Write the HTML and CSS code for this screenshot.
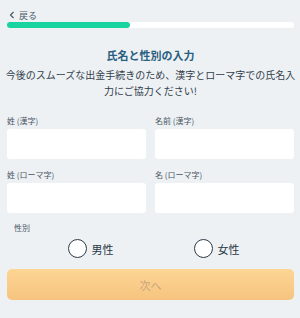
FILE: index.html
```html
<!DOCTYPE html>
<html>

<head>
    <meta name="viewport" content="width=device-width, initial-scale=1, user-scalable=no"/>
    <link rel="stylesheet" href="styles.css">
</head>

<body>
    <div class="page">
        <a class="back" href="#">
            <svg width="6" height="8" viewBox="0 0 6 8"><path d="M4.5 1 L1.5 4 L4.5 7" fill="none" stroke="#4a5866" stroke-width="1.2"/></svg>
            <span>戻る</span>
        </a>
        <div class="progress"><span class="progress-fill" style="width: 43%"></span></div>

        <h1 class="title">氏名と性別の入力</h1>
        <p class="lead">今後のスムーズな出金手続きのため、漢字とローマ字での氏名入力にご協力ください!</p>

        <div class="fields">
            <label class="field">
                <span class="field-label">姓 (漢字)</span>
                <input type="text">
            </label>
            <label class="field">
                <span class="field-label">名前 (漢字)</span>
                <input type="text">
            </label>
            <label class="field">
                <span class="field-label">姓 (ローマ字)</span>
                <input type="text">
            </label>
            <label class="field">
                <span class="field-label">名 (ローマ字)</span>
                <input type="text">
            </label>
        </div>

        <div class="gender">
            <span class="gender-label">性別</span>
            <div class="radios">
                <label class="radio"><span class="circle"></span>男性</label>
                <label class="radio"><span class="circle"></span>女性</label>
            </div>
        </div>

        <button class="next" disabled>次へ</button>
    </div>
</body>

</html>
```

FILE: styles.css
```css
body {
    margin: 0;
    background: #edf1f4;
    font-family: "Noto Sans CJK JP", "Noto Sans", sans-serif;
    color: #2f3b47;
}

.page {
    padding: 8px 6px 0 7px;
}

.back {
    display: flex;
    align-items: center;
    gap: 4px;
    height: 14px;
    padding-left: 2px;
    font-size: 9px;
    color: #4a5866;
    text-decoration: none;
}

.progress {
    height: 6px;
    border-radius: 3px;
    background: #ffffff;
}

.progress-fill {
    display: block;
    height: 100%;
    border-radius: 3px;
    background: #17d3a0;
}

.title {
    margin: 19px 0 0;
    text-align: center;
    font-size: 11px;
    line-height: 16px;
    font-weight: bold;
    color: #2a5f7f;
}

.lead {
    margin: 4px -2px 0;
    text-align: center;
    font-size: 10px;
    line-height: 16px;
    color: #33404c;
}

.fields {
    display: grid;
    grid-template-columns: minmax(0, 1fr) minmax(0, 1fr);
    column-gap: 9px;
    row-gap: 10px;
    margin-top: 16px;
}

.field {
    display: flex;
    flex-direction: column;
    gap: 3px;
    min-width: 0;
}

.field-label {
    font-size: 8px;
    line-height: 11px;
    color: #4a5663;
}

.field input {
    width: 100%;
    height: 30px;
    box-sizing: border-box;
    border: none;
    border-radius: 3px;
    background: #ffffff;
}

.gender {
    margin-top: 9px;
}

.gender-label {
    display: block;
    padding-left: 7px;
    font-size: 8px;
    line-height: 11px;
    color: #4a5663;
}

.radios {
    display: flex;
    justify-content: center;
    gap: 80px;
    margin-top: 6px;
    padding-left: 6px;
}

.radio {
    display: flex;
    align-items: center;
    gap: 5px;
    font-size: 11px;
    color: #2a3846;
}

.circle {
    width: 17px;
    height: 17px;
    border: 1.5px solid #2c3a48;
    border-radius: 50%;
    background: #ffffff;
}

.next {
    display: block;
    width: 100%;
    height: 31px;
    margin-top: 11px;
    border: none;
    border-radius: 5px;
    background: linear-gradient(#fdd594, #f6c47f);
    font-family: inherit;
    font-size: 11px;
    color: #c8a57f;
}
```
